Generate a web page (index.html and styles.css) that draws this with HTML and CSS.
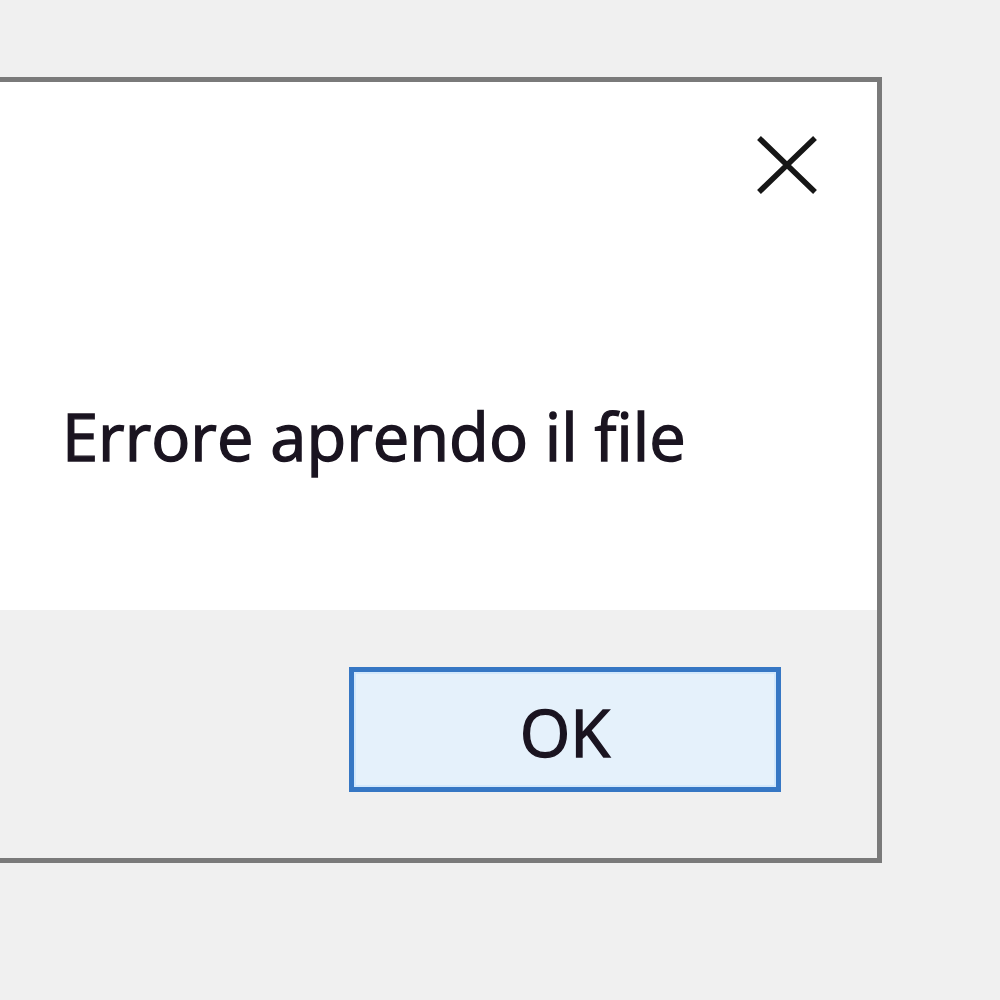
FILE: index.html
```html
<!DOCTYPE html>
<html lang="it">
<head>
  <meta charset="UTF-8">
  <title>Errore</title>
  <link rel="stylesheet" href="styles.css">
</head>
<body>
  <div class="dialog">
    <div class="dialog-body">
      <div class="titlebar">
        <button class="close" aria-label="Chiudi">
          <svg width="62" height="60" viewBox="0 0 62 60">
            <path d="M3 3 L59 57 M59 3 L3 57" stroke="#161616" stroke-width="5.5" fill="none"/>
          </svg>
        </button>
      </div>
      <p class="message">Errore aprendo il file</p>
    </div>
    <div class="dialog-footer">
      <button class="ok">OK</button>
    </div>
  </div>
</body>
</html>
```

FILE: styles.css
```css
body {
  margin: 0;
  padding: 0;
  background-color: #f0f0f0;
  font-family: "Open Sans", "Noto Sans", sans-serif;
}
.dialog {
  margin: 77px 0 0 -18px;
  width: 900px;
  border: 5px solid #7a7a7a;
  box-sizing: border-box;
  display: flex;
  flex-direction: column;
}
.dialog-body {
  background: #fff;
  height: 528px;
  padding: 0 59px 0 75px;
}
.titlebar {
  display: flex;
  justify-content: flex-end;
  padding-top: 53px;
}
.close {
  border: 0;
  background: none;
  padding: 0;
  width: 62px;
  height: 60px;
  display: block;
}
.close svg {
  display: block;
}
.message {
  margin: 209px 0 0;
  font-size: 65px;
  line-height: 1;
  color: #1a1420;
  -webkit-text-stroke: 1.4px #1a1420;
}
.dialog-footer {
  background: #f0f0f0;
  height: 248px;
  display: flex;
  justify-content: flex-end;
  align-items: flex-start;
  padding: 57px 96px 0 0;
  box-sizing: border-box;
}
.ok {
  width: 432px;
  height: 125px;
  box-sizing: border-box;
  border: 5px solid #3677c4;
  box-shadow: inset 0 0 0 2px #d2e8fc;
  background: #e5f1fb;
  font-family: "Open Sans", "Noto Sans", sans-serif;
  font-size: 65px;
  color: #1a1420;
  -webkit-text-stroke: 1.4px #1a1420;
  padding: 4px 0 0;
}
```
